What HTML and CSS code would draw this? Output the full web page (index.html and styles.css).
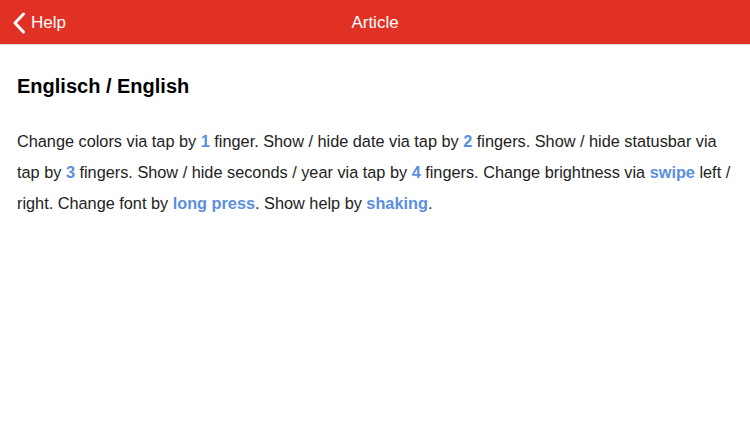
FILE: index.html
```html
<!DOCTYPE html>
<html>
<head>
<meta charset="utf-8">
<link rel="stylesheet" href="styles.css">
</head>
<body>
<header class="navbar">
  <a class="back">
    <svg class="chev" width="14" height="22" viewBox="0 0 14 22"><path d="M11.5 2 L3 11 L11.5 20" fill="none" stroke="#fff" stroke-width="3" stroke-linecap="round" stroke-linejoin="round"/></svg>
    <span>Help</span>
  </a>
  <div class="title">Article</div>
  <div class="spacer"></div>
</header>
<main class="content">
  <h1>Englisch / English</h1>
  <p>Change colors via tap by <b>1</b> finger. Show / hide date via tap by <b>2</b> fingers. Show / hide statusbar via tap by <b>3</b> fingers. Show / hide seconds / year via tap by <b>4</b> fingers. Change brightness via <b>swipe</b> left / right. Change font by <b>long press</b>. Show help by <b>shaking</b>.</p>
</main>
</body>
</html>
```
FILE: styles.css
```css
html, body {
  margin: 0;
  padding: 0;
  background: #fff;
  font-family: "Liberation Sans", Arial, sans-serif;
}
.navbar {
  background: #e13125;
  border-bottom: 1px solid #e6d8d6;
  display: flex;
  align-items: center;
  padding-top: 1px;
  box-sizing: border-box;
  height: 45px;
  color: #fff;
}
.back {
  width: 120px;
  display: flex;
  align-items: center;
  gap: 5px;
  padding-left: 12px;
  font-size: 17px;
}
.chev { display: block; }
.title {
  flex: 1;
  text-align: center;
  font-size: 17px;
}
.spacer { width: 132px; }
.content {
  padding: 30px 8px 0 17px;
}
h1 {
  margin: 0;
  font-size: 20px;
  font-weight: bold;
  color: #000;
}
p {
  margin: 28px 0 0 0;
  font-size: 16.3px;
  line-height: 31px;
  color: #222;
}
b {
  color: #5b8fe0;
}
```
